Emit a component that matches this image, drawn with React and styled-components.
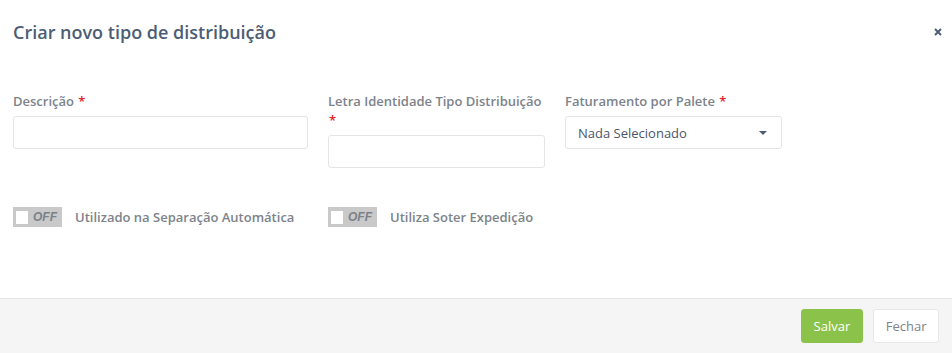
import React, { useState } from 'react';
import styled, { createGlobalStyle } from 'styled-components';

const GlobalStyle = createGlobalStyle`
  html, body {
    margin: 0;
    padding: 0;
    background: #ffffff;
    font-family: 'Open Sans', 'Noto Sans', sans-serif;
  }
`;

const Modal = styled.div`
  width: 952px;
  height: 353px;
  display: flex;
  flex-direction: column;
  background: #fff;
`;

const Header = styled.div`
  display: flex;
  align-items: center;
  justify-content: space-between;
  height: 64px;
  padding: 0 8px 0 13px;
  box-sizing: border-box;
`;

const Title = styled.h4`
  margin: 0;
  font-size: 18px;
  font-weight: 600;
  color: #4c5d75;
`;

const Close = styled.button`
  border: 0;
  background: none;
  padding: 0;
  width: 12px;
  height: 12px;
  display: flex;
  align-items: center;
  justify-content: center;
  cursor: pointer;
`;

const Body = styled.div`
  flex: 1;
  padding: 28px 13px 0;
`;

const Row = styled.div`
  display: grid;
  grid-template-columns: 295px 217px 217px;
  column-gap: 20px;
  align-items: start;
`;

const Field = styled.div`
  display: flex;
  flex-direction: column;
`;

const Label = styled.label`
  font-size: 13px;
  font-weight: 600;
  color: #7d838b;
  line-height: 19px;
  margin-bottom: 5px;
`;

const Req = styled.span`
  color: #e3242b;
  margin-left: 1px;
`;

const Input = styled.input`
  height: 33px;
  box-sizing: border-box;
  border: 1px solid #e5e5e5;
  border-radius: 3px;
  padding: 0 12px;
  font: inherit;
  outline: none;
`;

const Select = styled.div`
  height: 33px;
  box-sizing: border-box;
  border: 1px solid #e5e5e5;
  border-radius: 3px;
  padding: 0 14px 0 12px;
  display: flex;
  align-items: center;
  justify-content: space-between;
  font-size: 13px;
  color: #4b5668;
`;

const Caret = styled.span`
  width: 0;
  height: 0;
  border-left: 4px solid transparent;
  border-right: 4px solid transparent;
  border-top: 4px solid #4c5d75;
`;

const Toggles = styled.div`
  display: grid;
  grid-template-columns: 295px 237px;
  column-gap: 20px;
  margin-top: 39px;
`;

const ToggleRow = styled.div`
  display: flex;
  align-items: center;
  gap: 13px;
`;

const Switch = styled.button`
  width: 49px;
  height: 20px;
  border: 0;
  padding: 0 0 0 3px;
  background: ${p => (p.$on ? '#8bc34a' : '#c9c9c9')};
  display: flex;
  align-items: center;
  gap: 5px;
  cursor: pointer;
`;

const Knob = styled.span`
  width: 12px;
  height: 13px;
  background: #fff;
`;

const SwitchText = styled.span`
  font-size: 12px;
  font-style: italic;
  font-weight: 700;
  color: #7b8189;
`;

const ToggleLabel = styled.span`
  font-size: 13px;
  font-weight: 600;
  color: #7d838b;
`;

const Footer = styled.div`
  height: 54px;
  border-top: 1px solid #e5e5e5;
  background: #f5f5f5;
  display: flex;
  align-items: center;
  justify-content: flex-end;
  gap: 10px;
  padding: 0 13px 0 0;
`;

const Button = styled.button`
  height: 34px;
  padding: 0 ${p => (p.$primary ? '12px' : '11.5px')};
  border-radius: 3px;
  border: 1px solid ${p => (p.$primary ? '#8bc34a' : '#e8e8e8')};
  background: ${p => (p.$primary ? '#8bc34a' : '#ffffff')};
  color: ${p => (p.$primary ? '#ffffff' : '#7d838b')};
  font-family: inherit;
  font-size: 13px;
  cursor: pointer;
`;

const Toggle = ({ label }) => {
  const [on, setOn] = useState(false);
  return (
    <ToggleRow>
      <Switch $on={on} onClick={() => setOn(!on)}>
        <Knob />
        <SwitchText>{on ? 'ON' : 'OFF'}</SwitchText>
      </Switch>
      <ToggleLabel>{label}</ToggleLabel>
    </ToggleRow>
  );
};

export default function App() {
  return (
    <>
      <GlobalStyle />
      <Modal>
        <Header>
          <Title>Criar novo tipo de distribuição</Title>
          <Close aria-label="Fechar">
            <svg width="8" height="8" viewBox="0 0 8 8">
              <path d="M1 1L7 7M7 1L1 7" stroke="#4c5d75" strokeWidth="2" />
            </svg>
          </Close>
        </Header>
        <Body>
          <Row>
            <Field>
              <Label>Descrição <Req>*</Req></Label>
              <Input />
            </Field>
            <Field>
              <Label>Letra Identidade Tipo Distribuição <Req>*</Req></Label>
              <Input />
            </Field>
            <Field>
              <Label>Faturamento por Palete <Req>*</Req></Label>
              <Select>
                Nada Selecionado
                <Caret />
              </Select>
            </Field>
          </Row>
          <Toggles>
            <Toggle label="Utilizado na Separação Automática" />
            <Toggle label="Utiliza Soter Expedição" />
          </Toggles>
        </Body>
        <Footer>
          <Button $primary>Salvar</Button>
          <Button>Fechar</Button>
        </Footer>
      </Modal>
    </>
  );
}
